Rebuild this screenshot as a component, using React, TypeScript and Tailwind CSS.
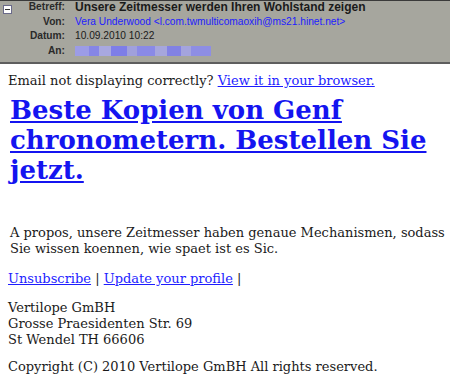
export default function App() {
  const rows: { label: string; value: React.ReactNode }[] = [
    { label: "Betreff:", value: <span className="font-bold text-[12px] text-[#1a1a1a]">Unsere Zeitmesser werden Ihren Wohlstand zeigen</span> },
    { label: "Von:", value: <span className="text-[#1d1dff]">Vera Underwood &lt;l.com.twmulticomaoxih@ms21.hinet.net&gt;</span> },
    { label: "Datum:", value: <span className="text-[#1a1a1a]">10.09.2010 10:22</span> },
    {
      label: "An:",
      value: (
        <span className="inline-flex h-[10px] w-[136px] translate-y-[2px] bg-[#a3a3dc]">
          <span className="w-[14px] bg-[#9c9ce6]" />
          <span className="w-[10px] bg-[#8686e6]" />
          <span className="w-[12px] bg-[#a8a8e0]" />
          <span className="w-[16px] bg-[#7e7ee8]" />
          <span className="w-[10px] bg-[#a0a0dc]" />
          <span className="w-[18px] bg-[#8a8ae6]" />
          <span className="w-[12px] bg-[#a6a6dc]" />
          <span className="w-[14px] bg-[#8282e4]" />
          <span className="w-[10px] bg-[#a4a4de]" />
          <span className="w-[20px] bg-[#8e8ee4]" />
        </span>
      ),
    },
  ];

  return (
    <div className="w-[450px] h-[381px] overflow-hidden bg-white">
      {/* Header */}
      <div className="relative bg-[#a6a69e] border-t border-[#3a3a3a] border-b-2 border-b-[#5e5e5e] h-[64px] font-['Liberation_Sans',Arial,sans-serif] text-[10.2px]">
        <div className="absolute left-[3px] top-[4px] w-[9px] h-[9px] bg-white border border-[#6a6a8a] flex items-center justify-center">
          <div className="w-[5px] h-[1px] bg-[#333]" />
        </div>
        <div className="-mt-[1px]">
          {rows.map((r) => (
            <div key={r.label} className="flex h-[14.6px] items-center leading-[14px]">
              <div className="w-[65px] text-right font-bold text-[#2a2a2a] shrink-0">{r.label}</div>
              <div className="pl-[10px] whitespace-nowrap">{r.value}</div>
            </div>
          ))}
        </div>
      </div>

      {/* Body */}
      <div className="px-[8px] pt-[9px] font-['DejaVu_Serif',serif] text-[13px] leading-[16px] text-[#1a1a1a]">
        <p>
          Email not displaying correctly? <a className="text-[#1d1dff] underline">View it in your browser.</a>
        </p>
        <h1 className="pl-[2px] mt-[6px] text-[26px] leading-[30px] font-bold">
          <a className="text-[#1414f0] underline">Beste Kopien von Genf chronometern. Bestellen Sie jetzt.</a>
        </h1>
        <p className="pl-[2px] -mr-[8px] mt-[40px]">
          A propos, unsere Zeitmesser haben genaue Mechanismen, sodass Sie wissen koennen, wie spaet ist es Sic.
        </p>
        <p className="mt-[14px]">
          <a className="text-[#1d1dff] underline">Unsubscribe</a> | <a className="text-[#1d1dff] underline">Update your profile</a> |
        </p>
        <p className="mt-[13px]">
          Vertilope GmBH<br />Grosse Praesidenten Str. 69<br />St Wendel TH 66606
        </p>
        <p className="mt-[11px]">Copyright (C) 2010 Vertilope GmBH All rights reserved.</p>
      </div>
    </div>
  );
}
